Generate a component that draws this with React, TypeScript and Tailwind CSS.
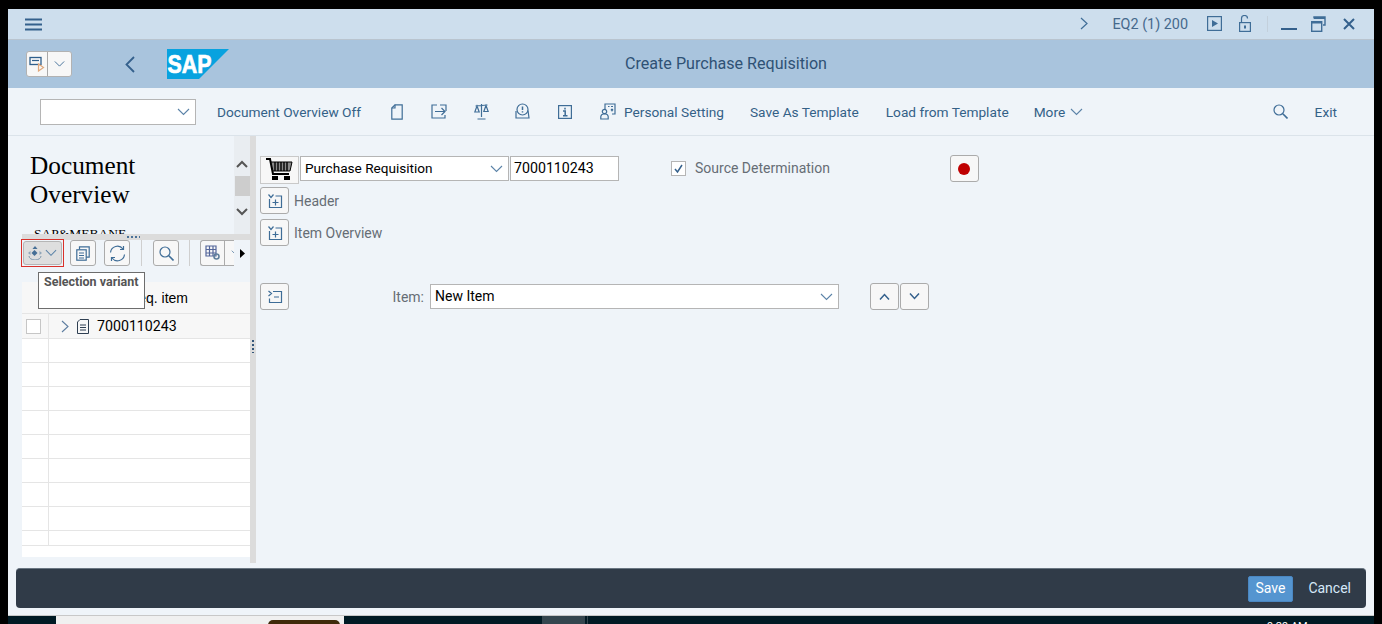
import React from "react";

const I = "#3f6d97";
const Svg = ({ w = 18, h = 18, children }: { w?: number; h?: number; children: React.ReactNode }) => (
  <svg width={w} height={h} viewBox={`0 0 ${w} ${h}`} fill="none" stroke={I} strokeWidth={1.2} className="block shrink-0">
    {children}
  </svg>
);

const Chevron = ({ c = "#5b83a8", w = 13 }: { c?: string; w?: number }) => (
  <svg width={w} height="8" viewBox="0 0 13 8" fill="none" stroke={c} strokeWidth="1.1" className="block shrink-0">
    <path d="M1 1l5.5 5.5L12 1" />
  </svg>
);

const Btn = ({ className = "", children }: { className?: string; children?: React.ReactNode }) => (
  <div className={`flex items-center justify-center rounded-[3px] border border-[#ababab] bg-[#f7f7f7] ${className}`}>{children}</div>
);

const Expand = ({ minus = false }: { minus?: boolean }) => (
  <Svg w={16} h={16}>
    {minus ? (
      <path d="M1.5 2l3 2.5-3 2.5M6 2.5h8.5v11H2.5V9.5M7 8h5" />
    ) : (
      <path d="M1.5 1.5l2.5 3 2.5-3M8.5 3h6v11.5h-12V6M5.5 9.5h6M8.5 6.5v6" />
    )}
  </Svg>
);

const Logo = () => (
  <svg width="62" height="30" viewBox="0 0 62 30" className="block">
    <polygon points="0,0 62,0 32,30 0,30" fill="#08a2df" />
    <text x="0.5" y="24" fontFamily="'Liberation Sans', sans-serif" fontWeight="700" fontSize="26" fill="#fff" stroke="#fff" strokeWidth="0.7" textLength="44" lengthAdjust="spacingAndGlyphs">SAP</text>
  </svg>
);

const Cart = () => (
  <svg width="28" height="24" viewBox="0 0 28 24" fill="none" className="block">
    <path d="M0 1h4l3 15h16" stroke="#000" strokeWidth="2" />
    <path d="M5 4h21l-2 9H7z" fill="#8a8a8a" stroke="#000" strokeWidth="1" />
    <path d="M9 4v9M12 4v9M15 4v9M18 4v9M21 4v9" stroke="#000" strokeWidth="1.4" />
    <rect x="6" y="18" width="6" height="4" fill="#000" />
    <rect x="18" y="18" width="6" height="4" fill="#000" />
  </svg>
);

const ToolText = ({ children, className = "" }: { children: React.ReactNode; className?: string }) => (
  <span className={`mt-[2px] whitespace-nowrap text-[13.7px] text-[#346187] ${className}`}>{children}</span>
);

function TitleBar() {
  return (
    <div className="flex h-[31px] shrink-0 items-center border-b border-[#b9c4cf] bg-[#cddeed] pl-[17px]">
      <svg width="17" height="13" viewBox="0 0 17 13" stroke="#34608c" strokeWidth="1.8" className="block">
        <path d="M0 1.5h17M0 6.5h17M0 11.5h17" />
      </svg>
      <div className="ml-auto flex items-center">
        <svg width="8" height="13" viewBox="0 0 8 13" fill="none" stroke="#3f6d97" strokeWidth="1.2" className="block">
          <path d="M1 1l6 5.5L1 12" />
        </svg>
        <span className="ml-[24px] mt-[1px] whitespace-nowrap text-[14.4px] text-[#45698c]">EQ2 (1) 200</span>
        <div className="ml-[19px]">
          <Svg w={15} h={15}>
            <rect x="0.6" y="0.6" width="13.8" height="13.8" />
            <path d="M5 4l6 3.5L5 11z" fill={I} stroke="none" />
          </Svg>
        </div>
        <div className="ml-[17px]">
          <Svg w={12} h={17}>
            <rect x="0.6" y="7.6" width="10.8" height="8.8" />
            <path d="M2.5 7.5V3.5a3 3 0 0 1 6 0" />
            <path d="M6 10.5v3" strokeWidth="2" />
          </Svg>
        </div>
        <div className="ml-[16px] h-[16px] w-px bg-[#c3d0dc]" />
        <div className="ml-[13px] mt-[10px] h-[2px] w-[16px] bg-[#34608c]" />
        <div className="ml-[14px]">
          <Svg w={15} h={16}>
            <path d="M3 2.5V1h11v8h-2" strokeWidth="1.4" />
            <path d="M3 2h11" strokeWidth="2" />
            <rect x="0.7" y="5.7" width="10" height="9.6" strokeWidth="1.4" />
            <path d="M1 6.5h10" strokeWidth="2" />
          </Svg>
        </div>
        <div className="ml-[17px] mr-[19px]">
          <svg width="12" height="12" viewBox="0 0 12 12" stroke="#34608c" strokeWidth="2" className="block">
            <path d="M1 1l10 10M11 1L1 11" />
          </svg>
        </div>
      </div>
    </div>
  );
}

function HeaderBar() {
  return (
    <div className="relative flex h-[48px] shrink-0 items-center bg-[#a9c4dd] pl-[18px]">
      <div className="flex h-[26px] w-[46px] rounded-[3px] border border-[#b2b2b2] bg-[#f7f7f7]">
        <div className="flex w-[21px] items-center justify-center border-r border-[#a8a8a8]">
          <Svg w={16} h={16}>
            <rect x="1" y="1.5" width="11" height="7" stroke="#2f5f8c" strokeWidth="1.3" />
            <path d="M3 4.5h7" stroke="#2f5f8c" />
            <path d="M9.5 8v7l5-3.5z" stroke="#e0a87c" />
          </Svg>
        </div>
        <div className="flex flex-1 items-center justify-center">
          <Chevron w={11} c="#3f6d97" />
        </div>
      </div>
      <div className="ml-[53px]">
        <svg width="10" height="17" viewBox="0 0 10 17" fill="none" stroke="#34608c" strokeWidth="1.8" className="block">
          <path d="M9 1L1.5 8.5 9 16" />
        </svg>
      </div>
      <div className="ml-[32px]">
        <Logo />
      </div>
      <span className="pointer-events-none absolute inset-x-0 pl-[70px] text-center text-[16.1px] text-[#2f5275]">Create Purchase Requisition</span>
    </div>
  );
}

function Toolbar() {
  return (
    <div className="flex h-[48px] shrink-0 items-center border-b border-[#dbe3ea] bg-[#eff4f9] pl-[32px]">
      <div className="flex h-[26px] w-[156px] items-center justify-end border border-[#b5b5b5] bg-white pr-[5px]">
        <Chevron />
      </div>
      <ToolText className="ml-[21px] text-[#3f5f7f]">Document Overview Off</ToolText>
      <div className="ml-[30px]">
        <Svg w={12} h={16}>
          <path d="M4 .8h7.2v14.4H.8V4z" />
          <path d="M.8 4H4V.8" />
        </Svg>
      </div>
      <div className="ml-[28px]">
        <Svg w={17} h={16}>
          <path d="M6 1H1v13h13v-3M9 1h6v6" />
          <path d="M4 7.5h10M10.5 4l3.5 3.5-3.5 3.5" />
        </Svg>
      </div>
      <div className="ml-[26px]">
        <Svg w={15} h={17}>
          <path d="M7.5 1v13M3.5 16h8M1.5 3l12-1M3 3L.8 9h4.4zM12 2.5L9.8 8.5h4.4z" />
        </Svg>
      </div>
      <div className="ml-[26px]">
        <Svg w={15} h={17}>
          <circle cx="7.5" cy="6.5" r="5.5" />
          <path d="M7.5 3.5v3.5M7.5 8.3v1.3" strokeWidth="1.5" />
          <path d="M1 8v7h13l-1-7.5" />
        </Svg>
      </div>
      <div className="ml-[28px]">
        <Svg w={14} h={14}>
          <rect x="0.6" y="0.6" width="12.8" height="12.8" />
          <path d="M7 2.8v1.6M5 6h2.2v4.5M5 10.8h4.5" strokeWidth="1.5" />
        </Svg>
      </div>
      <div className="ml-[28px]">
        <Svg w={16} h={17}>
          <path d="M5 7V1h10v10h-3" />
          <path d="M8 3.5h1.5M11 3.5h2M11 6l2 2M13 6l-2 2" />
          <circle cx="4.5" cy="8.5" r="2.2" />
          <path d="M.8 16v-2.5a3 3 0 0 1 3-2.5h1.4a3 3 0 0 1 3 2.5V16z" />
        </Svg>
      </div>
      <ToolText className="ml-[8px]">Personal Setting</ToolText>
      <ToolText className="ml-[26px]">Save As Template</ToolText>
      <ToolText className="ml-[27px]">Load from Template</ToolText>
      <ToolText className="ml-[25px]">More</ToolText>
      <div className="ml-[5px] mt-[1px]">
        <Chevron />
      </div>
      <div className="ml-auto">
        <Svg w={15} h={15}>
          <circle cx="6" cy="6" r="5" />
          <path d="M9.8 9.8L14.5 14.5" strokeWidth="1.6" />
        </Svg>
      </div>
      <ToolText className="ml-[27px] mr-[37px]">Exit</ToolText>
    </div>
  );
}

function OverviewPanel() {
  return (
    <div className="flex h-[98px] shrink-0 overflow-hidden pl-[8px]">
      <div className="flex-1 pt-[15px] font-['Liberation_Serif',serif] text-[#000]">
        <div className="text-[25.3px] leading-[29px]">
          Document
          <br />
          Overview
        </div>
        <div className="ml-[4px] mt-[17px] whitespace-nowrap text-[13.5px] leading-[16px]">SAP&amp;MEBANE...</div>
      </div>
      <div className="flex w-[16px] flex-col items-center bg-[#e9edf1] pt-[24px]">
        <svg width="12" height="8" viewBox="0 0 12 8" fill="none" stroke="#555" strokeWidth="2" className="block">
          <path d="M1 7l5-5 5 5" />
        </svg>
        <div className="mt-[8px] h-[20px] w-[15px] bg-[#cdcdcd]" />
        <svg width="12" height="8" viewBox="0 0 12 8" fill="none" stroke="#555" strokeWidth="2" className="mt-[12px] block">
          <path d="M1 1l5 5 5-5" />
        </svg>
      </div>
    </div>
  );
}

function HSplitter() {
  return (
    <div className="flex h-[6px] shrink-0 items-start justify-center bg-[#dcdcdc] pr-[5px] pt-[2px]">
      <div className="h-[2px] w-[13px] bg-[repeating-linear-gradient(90deg,#4a7299_0,#4a7299_2px,transparent_2px,transparent_4px)]" />
    </div>
  );
}

function PanelTools() {
  return (
    <div className="relative flex h-[42px] shrink-0 items-start">
      <div className="-ml-[1px] -mt-[1px] h-[28px] w-[43px] border border-[#d9312b] p-px">
        <div className="flex h-full items-center justify-center gap-[3px] rounded-[3px] border border-[#b5b5b5] bg-[#dedede] pr-[1px]">
          <svg width="14" height="14" viewBox="0 0 14 14" className="block">
            <path d="M7 0l2.5 3H4.5z" fill="#466f96" />
            <path d="M3.5 7l3-3 3 3-3 3z" fill="#466f96" />
            <path d="M0 7l2.5-2v4zM14 7l-2.5-2v4z" fill="#8ea4b8" />
            <path d="M1 10a6 4 0 0 0 12 0" fill="none" stroke="#7d97ae" />
          </svg>
          <Chevron w={12} />
        </div>
      </div>
      <Btn className="ml-[6px] h-[26px] w-[26px]">
        <Svg w={14} h={15}>
          <rect x="0.8" y="3.8" width="9.4" height="10.4" />
          <path d="M3.5 3.5V.8h9.7v10.4h-3M3 7h5M3 9.5h5M3 12h5" />
        </Svg>
      </Btn>
      <Btn className="ml-[8px] h-[26px] w-[26px]">
        <Svg w={17} h={17}>
          <path d="M1.5 7.5A7 7 0 0 1 14 4" />
          <path d="M15.5 9.5A7 7 0 0 1 3 13" />
          <path d="M14.5 1v3.5H11M2.5 16v-3.5H6" />
        </Svg>
      </Btn>
      <div className="ml-[11px] h-[26px] w-px bg-[#cfcfcf]" />
      <Btn className="ml-[11px] h-[26px] w-[26px]">
        <Svg w={15} h={15}>
          <circle cx="6" cy="6" r="5" />
          <path d="M9.8 9.8L14.5 14.5" strokeWidth="1.6" />
        </Svg>
      </Btn>
      <div className="ml-[10px] h-[26px] w-px bg-[#cfcfcf]" />
      <div className="ml-[10px] flex h-[26px] w-[34px] overflow-hidden rounded-l-[3px] border border-r-0 border-[#ababab] bg-[#f7f7f7]">
        <div className="flex w-[24px] shrink-0 items-center justify-center border-r border-[#ababab]">
          <Svg w={16} h={16}>
            <path d="M1 1h10v10H1zM1 4.5h10M1 8h10M4.5 1v10M8 1v10" stroke="#54669a" />
            <circle cx="11.5" cy="11.5" r="2.5" stroke="#5f7f9c" strokeWidth="1.6" />
          </Svg>
        </div>
        <div className="flex flex-1 items-center pl-[6px]">
          <Chevron w={10} />
        </div>
      </div>
      <div className="flex h-[26px] flex-1 items-center justify-center bg-[#eff4f9] pl-[1px]">
        <svg width="5" height="9" viewBox="0 0 5 9" className="block">
          <path d="M0 0l5 4.5L0 9z" fill="#000" />
        </svg>
      </div>
      <div className="absolute left-[16px] top-[32px] z-10 h-[37px] w-[107px] whitespace-nowrap border border-[#6d6d6d] bg-white px-[5px] pt-[1px] text-[12.5px] font-bold leading-[16px] text-[#555]">
        Selection variant
      </div>
    </div>
  );
}

function GridRow({ first = false, small = false }: { first?: boolean; small?: boolean }) {
  return (
    <div className={`flex shrink-0 border-b border-[#e5e5e5] ${small ? "h-[15px]" : first ? "h-[25px]" : "h-[24px]"} ${first ? "bg-[#f7f7f7]" : "bg-white"}`}>
      <div className="flex w-[27px] shrink-0 items-center border-r border-[#e5e5e5] pl-[4px]">
        {first && <div className="h-[15px] w-[15px] border border-[#c6c6c6] bg-white" />}
      </div>
      {first && (
        <div className="flex items-center">
          <svg width="8" height="13" viewBox="0 0 8 13" fill="none" stroke="#5d7da0" strokeWidth="1.1" className="ml-[12px] block">
            <path d="M1 1l6 5.5L1 12" />
          </svg>
          <div className="ml-[8px]">
            <svg width="12" height="15" viewBox="0 0 12 15" fill="none" stroke="#2f3f52" strokeWidth="1" className="block">
              <path d="M3 .5h8.5v14H.5V3zM3 6h6M3 8.5h6M3 11h6" />
            </svg>
          </div>
          <span className="ml-[8px] mt-[1px] text-[14.2px] text-[#000]">7000110243</span>
        </div>
      )}
    </div>
  );
}

function LeftPanel() {
  return (
    <div className="flex w-[248px] shrink-0">
      <div className="ml-[14px] flex w-[228px] flex-col pb-[6px]">
        <OverviewPanel />
        <HSplitter />
        <PanelTools />
        <div className="flex flex-1 flex-col overflow-hidden bg-white">
          <div className="flex h-[32px] shrink-0 items-center justify-end border-b border-[#e5e5e5] bg-[#f7f7f7] pr-[62px] pt-[1px] font-['Liberation_Sans',sans-serif] text-[14px] text-[#000]">
            Purch. req. item
          </div>
          <GridRow first />
          <GridRow />
          <GridRow />
          <GridRow />
          <GridRow />
          <GridRow />
          <GridRow />
          <GridRow />
          <GridRow />
          <GridRow small />
        </div>
      </div>
      <div className="flex w-[6px] shrink-0 flex-col items-center justify-center bg-[#dcdcdc] pb-[7px]">
        <div className="h-[13px] w-[2px] bg-[repeating-linear-gradient(180deg,#33567a_0,#33567a_2px,transparent_2px,transparent_4px)]" />
      </div>
    </div>
  );
}

const Label = ({ children, className = "" }: { children: React.ReactNode; className?: string }) => (
  <span className={`mt-[2px] whitespace-nowrap text-[14px] text-[#666d75] ${className}`}>{children}</span>
);

function RightPanel() {
  return (
    <div className="flex flex-1 flex-col pl-[4px] pt-[20px]">
      <div className="flex h-[28px] items-start">
        <div className="flex h-[28px] w-[39px] items-center justify-center border border-[#c9c9c9] bg-[#f7f7f7]">
          <Cart />
        </div>
        <div className="ml-[1px] flex h-[25px] w-[209px] items-center border border-[#b5b5b5] bg-white pl-[4px] pr-[5px] text-[13.6px] text-[#000]">
          <span className="whitespace-nowrap">Purchase Requisition</span>
          <div className="ml-auto">
            <Chevron />
          </div>
        </div>
        <div className="ml-[1px] flex h-[25px] w-[109px] items-center border border-[#b5b5b5] bg-white pl-[3px] text-[14.2px] text-[#000]">7000110243</div>
        <div className="ml-[52px] mt-[5px] flex h-[15px] w-[15px] items-center justify-center border border-[#b5b5b5] bg-white">
          <svg width="11" height="10" viewBox="0 0 11 10" fill="none" stroke="#34608c" strokeWidth="1.5" className="block">
            <path d="M2 5l2.5 3L9 1" />
          </svg>
        </div>
        <Label className="ml-[9px] w-[133px]">Source Determination</Label>
        <Btn className="-mt-[1px] ml-[122px] h-[27px] w-[29px] pr-[2px]">
          <div className="h-[12px] w-[12px] rounded-full bg-[#bf0000]" />
        </Btn>
      </div>
      <div className="mt-[3px] flex h-[27px] items-center">
        <Btn className="h-[27px] w-[29px]">
          <Expand />
        </Btn>
        <Label className="ml-[5px]">Header</Label>
      </div>
      <div className="mt-[5px] flex h-[27px] items-center">
        <Btn className="h-[27px] w-[29px]">
          <Expand />
        </Btn>
        <Label className="ml-[5px]">Item Overview</Label>
      </div>
      <div className="mt-[37px] flex h-[27px] items-center">
        <Btn className="h-[27px] w-[29px]">
          <Expand minus />
        </Btn>
        <Label className="w-[135px] text-right">Item:</Label>
        <div className="ml-[6px] flex h-[25px] w-[409px] items-center border border-[#b5b5b5] bg-white pl-[4px] pr-[5px] text-[14px] text-[#000]">
          <span>New Item</span>
          <div className="ml-auto">
            <Chevron />
          </div>
        </div>
        <Btn className="ml-[31px] h-[27px] w-[29px]">
          <svg width="11" height="7" viewBox="0 0 11 7" fill="none" stroke="#34608c" strokeWidth="1.5" className="block">
            <path d="M1 6.5l4.5-5 4.5 5" />
          </svg>
        </Btn>
        <Btn className="ml-[1px] h-[27px] w-[29px]">
          <svg width="11" height="7" viewBox="0 0 11 7" fill="none" stroke="#34608c" strokeWidth="1.5" className="block">
            <path d="M1 .5l4.5 5 4.5-5" />
          </svg>
        </Btn>
      </div>
    </div>
  );
}

function Footer() {
  return (
    <div className="mx-[8px] mb-[7px] mt-[5px] flex h-[40px] shrink-0 items-center justify-end rounded-[4px] border-t border-[#6a7682] bg-[#303b48] pr-[15px]">
      <div className="flex h-[26px] w-[45px] items-center justify-center rounded-[2px] border border-[#4a87c2] bg-[#5595d0] pr-[1px] text-[14px] text-white">Save</div>
      <span className="ml-[15px] text-[14px] text-[#d6e8f8]">Cancel</span>
    </div>
  );
}

function Taskbar() {
  return (
    <div className="flex h-[9px] shrink-0 overflow-hidden bg-[#001a24] pl-[48px]">
      <div className="h-[9px] w-[288px] bg-[#f0f0f0] pl-[212px] pt-[4px]">
        <div className="h-[5px] w-[72px] rounded-t-[5px] bg-[#3f2a0a]" />
      </div>
      <div className="ml-[198px] h-[9px] w-[43px] bg-[#34464f]" />
      <div className="ml-[2px] h-[9px] w-px bg-[#34464f]" />
      <span className="ml-[679px] mt-[3px] whitespace-nowrap text-[11px] leading-[16px] text-white">9:29 AM</span>
    </div>
  );
}

export default function App() {
  return (
    <div className="h-[624px] w-[1382px] overflow-hidden bg-black px-[8px] pt-[9px] font-['Roboto',sans-serif]">
      <div className="flex h-[607px] flex-col border-b border-[#c8c8c8] bg-[#eff4f9]">
        <TitleBar />
        <HeaderBar />
        <Toolbar />
        <div className="flex min-h-0 flex-1">
          <LeftPanel />
          <RightPanel />
        </div>
        <Footer />
      </div>
      <Taskbar />
    </div>
  );
}
